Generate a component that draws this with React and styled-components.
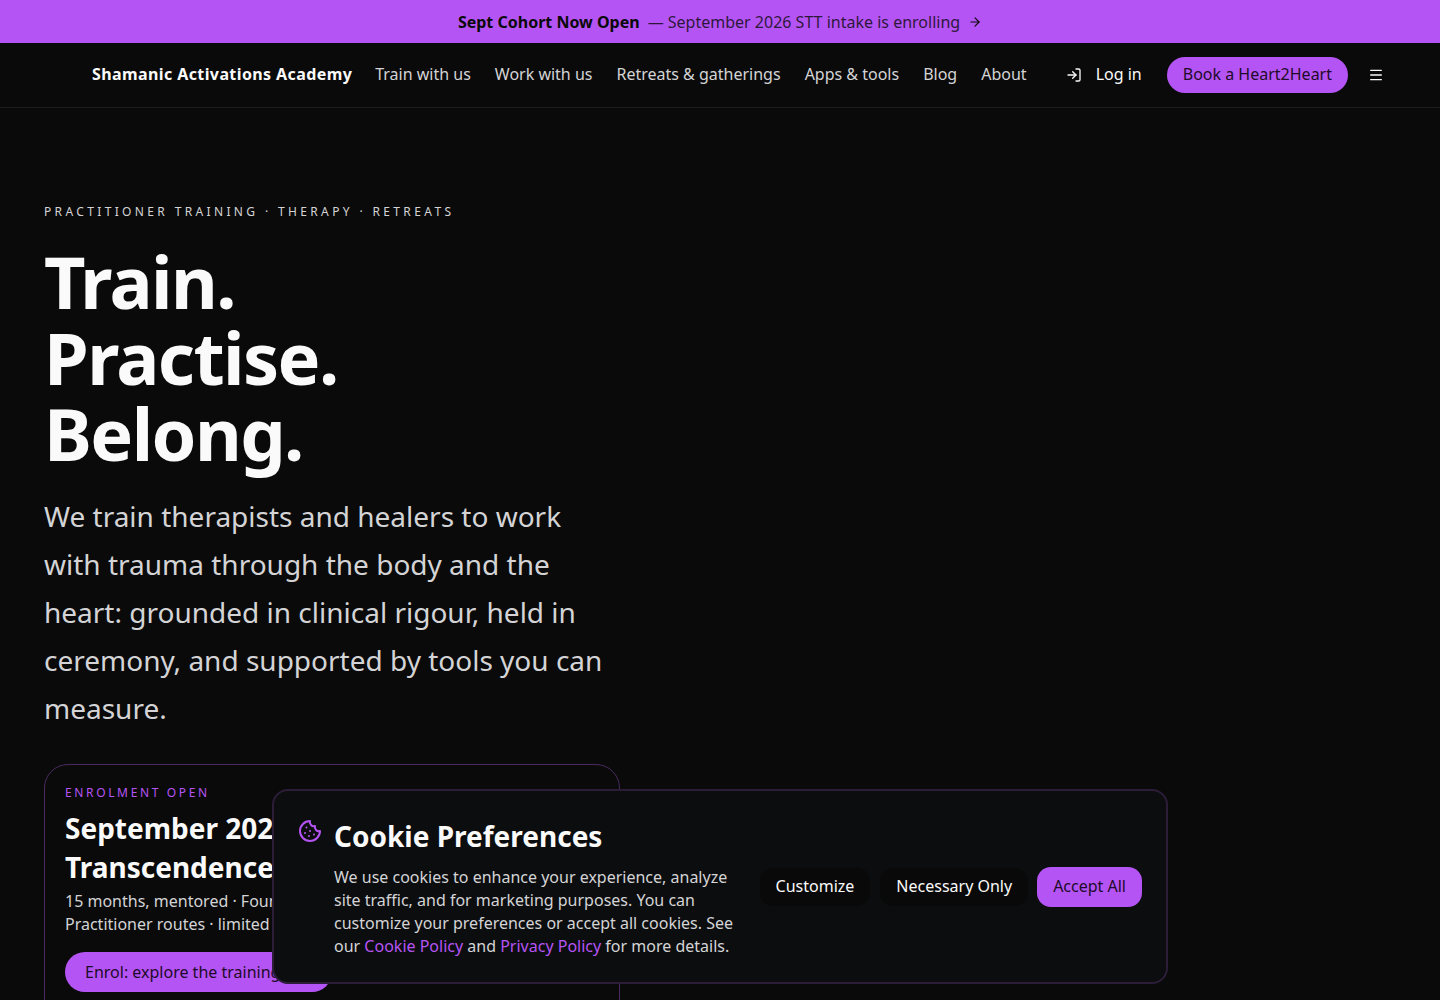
import React from "react";
import styled, { createGlobalStyle, css } from "styled-components";
import { ArrowRight, Cookie, LogIn, Menu } from "lucide-react";

const purple = "#b554f4";

const GlobalStyle = createGlobalStyle`
  *, *::before, *::after { box-sizing: border-box; }
  body {
    margin: 0;
    background: #0a0a0a;
    color: #fafafa;
    font-family: "Noto Sans", sans-serif;
    font-size: 16px;
    line-height: 23px;
  }
  h1, h2, p { margin: 0; }
  a { color: inherit; text-decoration: none; }
  button { font: inherit; cursor: pointer; }
`;

const Announcement = styled.a`
  display: flex;
  justify-content: center;
  align-items: center;
  gap: 8px;
  padding: 11px 16px 10px;
  line-height: 22px;
  background: ${purple};
  && { color: #0a0a0a; }
  span { opacity: 0.8; }
`;

const Header = styled.header`
  display: flex;
  align-items: center;
  height: 65px;
  padding: 0 44px 0 92px;
  border-bottom: 1px solid #1c1c1d;
`;

const Brand = styled.a`
  margin-right: 23px;
  padding-bottom: 1px;
  font-weight: 700;
  letter-spacing: 0.4px;
  white-space: nowrap;
`;

const Nav = styled.nav`
  display: flex;
  gap: 24px;
  padding-bottom: 1px;
  color: #d4d4d6;
  white-space: nowrap;
`;

const Actions = styled.div`
  display: flex;
  align-items: center;
  gap: 8px;
  margin-left: auto;
  white-space: nowrap;
`;

const Label = styled.span`
  padding-bottom: 1px;
`;

const control = css`
  display: inline-flex;
  align-items: center;
  justify-content: center;
  border: 0;
  white-space: nowrap;
`;

const LoginLink = styled.a`
  ${control}
  gap: 14px;
  height: 36px;
  padding: 0 17px;
  border-radius: 18px;
`;

const PillLink = styled.a`
  ${control}
  height: ${(p) => (p.$large ? 40 : 36)}px;
  padding: 0 ${(p) => (p.$large ? 20 : 16)}px;
  gap: 16px;
  border-radius: 20px;
  background: ${purple};
  && { color: #1d0b29; }
`;

const MenuButton = styled.button`
  ${control}
  width: 40px;
  height: 40px;
  padding: 0;
  background: transparent;
  color: #fafafa;
`;

const Hero = styled.main`
  display: flex;
  flex-direction: column;
  align-items: flex-start;
  max-width: 664px;
  padding: 92px 44px 64px;
`;

const Eyebrow = styled.p`
  color: ${(p) => (p.$accent ? purple : "#d4d4d6")};
  font-size: 12px;
  line-height: 24px;
  letter-spacing: ${(p) => (p.$accent ? "0.22em" : "0.28em")};
  text-transform: uppercase;
`;

const Title = styled.h1`
  margin-top: 19px;
  font-size: 72px;
  line-height: 76px;
  font-weight: 700;
  letter-spacing: -0.022em;
  span { display: block; }
`;

const Lead = styled.p`
  margin-top: 21px;
  color: #d4d4d6;
  font-size: 28px;
  line-height: 48px;
`;

const EnrolmentCard = styled.section`
  align-self: stretch;
  margin-top: 32px;
  padding: 16px 20px 40px;
  border: 1px solid #4a2a60;
  border-radius: 24px;
`;

const Heading = styled.h2`
  font-size: 28px;
  line-height: ${(p) => (p.$roomy ? 43 : 39)}px;
  font-weight: 700;
`;

const CardHeading = styled(Heading)`
  margin-top: 4px;
`;

const CardText = styled.p`
  margin: 3px 0 16px;
  color: #d4d4d6;
`;

const ConsentPanel = styled.section`
  position: fixed;
  bottom: 16px;
  left: 0;
  right: 0;
  display: flex;
  align-items: center;
  gap: 24px;
  max-width: 896px;
  margin: 0 auto;
  padding: 24px;
  border: 2px solid #2c1d38;
  border-radius: 16px;
  background: #0c0d0f;
`;

const ConsentBody = styled.div`
  display: flex;
  flex: 1;
  align-items: flex-start;
  gap: 12px;
  svg { flex: none; margin-top: 4px; color: ${purple}; }
`;

const ConsentText = styled.p`
  margin-top: 8px;
  color: #d4d4d6;
  a { color: ${purple}; }
`;

const ConsentActions = styled.div`
  display: flex;
  gap: 8px;
`;

const ConsentButton = styled.button`
  ${control}
  height: 40px;
  padding: 0 16px;
  border: ${(p) => (p.$primary ? "0" : "1px solid #0c0d0e")};
  border-radius: 14px;
  background: ${(p) => (p.$primary ? purple : "#090909")};
  color: ${(p) => (p.$primary ? "#1d0b29" : "#fafafa")};
`;

const navItems = ["Train with us", "Work with us", "Retreats & gatherings", "Apps & tools", "Blog", "About"];

export default function App() {
  return (
    <>
      <GlobalStyle />
      <Announcement href="#cohort">
        <strong>Sept Cohort Now Open</strong>
        <span>— September 2026 STT intake is enrolling</span>
        <ArrowRight size={14} />
      </Announcement>
      <Header>
        <Brand href="#home">Shamanic Activations Academy</Brand>
        <Nav>
          {navItems.map((item) => (
            <a key={item} href="#menu">{item}</a>
          ))}
        </Nav>
        <Actions>
          <LoginLink href="#login"><LogIn size={16} /><Label>Log in</Label></LoginLink>
          <PillLink href="#book"><Label>Book a Heart2Heart</Label></PillLink>
          <MenuButton aria-label="Open menu"><Menu size={16} /></MenuButton>
        </Actions>
      </Header>
      <Hero>
        <Eyebrow>Practitioner training · Therapy · Retreats</Eyebrow>
        <Title>
          <span>Train.</span>
          <span>Practise.</span>
          <span>Belong.</span>
        </Title>
        <Lead>
          We train therapists and healers to work with trauma through the body and the heart: grounded in
          clinical rigour, held in ceremony, and supported by tools you can measure.
        </Lead>
        <EnrolmentCard id="cohort">
          <Eyebrow $accent>Enrolment open</Eyebrow>
          <CardHeading>September 2026 Shamanic Trauma Transcendence</CardHeading>
          <CardText>
            15 months, mentored · Foundation and
            <br />
            Practitioner routes · limited places
          </CardText>
          <PillLink $large href="#training">Enrol: explore the training <ArrowRight size={16} /></PillLink>
        </EnrolmentCard>
      </Hero>
      <ConsentPanel aria-label="Cookie Preferences">
        <ConsentBody>
          <Cookie size={24} />
          <div>
            <Heading $roomy>Cookie Preferences</Heading>
            <ConsentText>
              We use cookies to enhance your experience, analyze site traffic, and for marketing purposes.
              You can customize your preferences or accept all cookies. See our{" "}
              <a href="#cookies">Cookie Policy</a> and <a href="#privacy">Privacy Policy</a> for more details.
            </ConsentText>
          </div>
        </ConsentBody>
        <ConsentActions>
          <ConsentButton>Customize</ConsentButton>
          <ConsentButton>Necessary Only</ConsentButton>
          <ConsentButton $primary>Accept All</ConsentButton>
        </ConsentActions>
      </ConsentPanel>
    </>
  );
}
